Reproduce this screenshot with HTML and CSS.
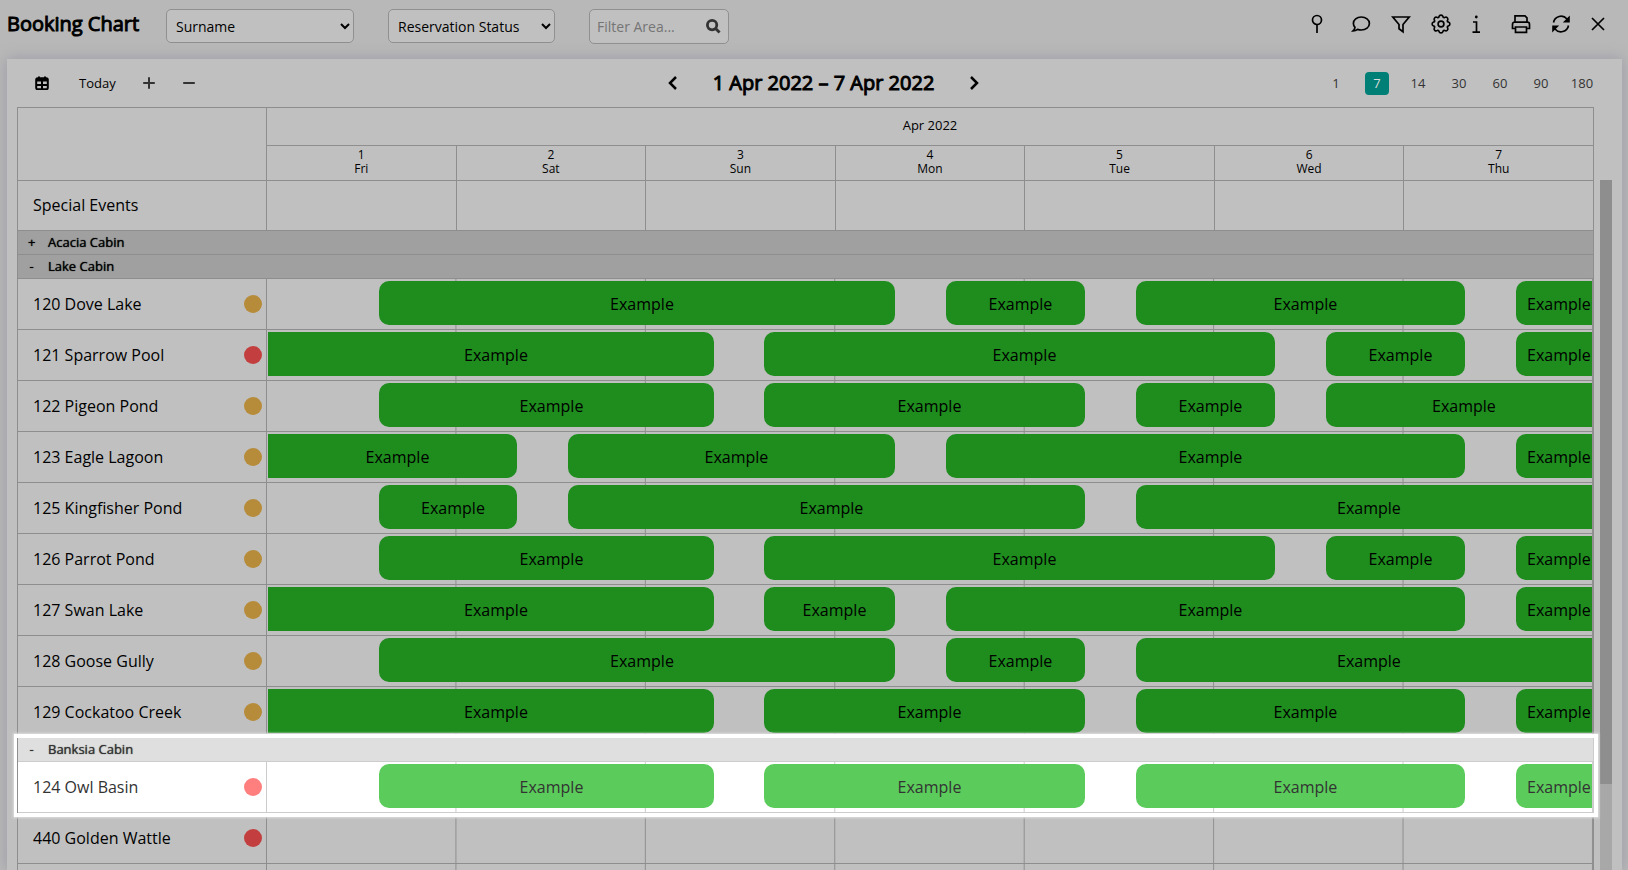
FILE: index.html
```html
<!DOCTYPE html>
<html lang="en">
<head>
<meta charset="utf-8">
<title>Booking Chart</title>
<link rel="stylesheet" href="styles.css">
</head>
<body>
<header class="topbar">
  <h1 class="title">Booking Chart</h1>
  <select class="field field-name" aria-label="Guest label"><option>Surname</option></select>
  <select class="field field-status" aria-label="Colour by"><option>Reservation Status</option></select>
  <div class="field search">
    <input type="text" class="search-input" placeholder="Filter Area..." aria-label="Filter area">
    <svg class="search-icon" viewBox="0 0 16 16"><circle cx="6.5" cy="6.5" r="5"/><path d="M10.2 10.2L14.5 14.5"/></svg>
  </div>
  <nav class="tools">
    <button class="pin" aria-label="Pin"><svg viewBox="0 0 20 20"><circle cx="10" cy="6" r="4.5"/><path d="M10 10.500V19"/></svg></button>
    <button aria-label="Comments"><svg viewBox="0 0 20 20"><path d="M10.300 3C5.800 3 2.400 5.800 2.400 9.400c0 1.500.6 2.900 1.600 4-.2 1.300-.9 2.600-2 3.600 1.800 0 3.400-.6 4.600-1.600 1.200.4 2.400.6 3.700.6 4.500 0 8.100-2.900 8.100-6.600S14.800 3 10.300 3z"/></svg></button>
    <button aria-label="Filter"><svg viewBox="0 0 20 20"><path d="M1.800 3H18.200L12 10.500V17.800L8 14.800V10.500Z"/></svg></button>
    <button aria-label="Settings"><svg class="gear" viewBox="-1 -1 18 18"><circle cx="8" cy="8" r="2.600"/><path d="M9.796 1.343c-.527-1.790-3.065-1.790-3.592 0l-.094.319a.873.873 0 0 1-1.255.52l-.292-.16c-1.640-.892-3.433.902-2.540 2.541l.159.292a.873.873 0 0 1-.52 1.255l-.319.094c-1.790.527-1.790 3.065 0 3.592l.319.094a.873.873 0 0 1 .52 1.255l-.16.292c-.892 1.640.901 3.434 2.541 2.540l.292-.159a.873.873 0 0 1 1.255.52l.094.319c.527 1.790 3.065 1.790 3.592 0l.094-.319a.873.873 0 0 1 1.255-.52l.292.16c1.640.893 3.434-.902 2.540-2.541l-.159-.292a.873.873 0 0 1 .52-1.255l.319-.094c1.790-.527 1.790-3.065 0-3.592l-.319-.094a.873.873 0 0 1-.52-1.255l.16-.292c.893-1.640-.902-3.433-2.541-2.540l-.292.159a.873.873 0 0 1-1.255-.52z"/></svg></button>
    <button class="info" aria-label="Information"><svg viewBox="0 0 20 20"><path d="M6 8H9.500V18M5.500 18.200H13"/><circle class="solid" cx="9.300" cy="3" r="1.400"/></svg></button>
    <button class="print" aria-label="Print"><svg viewBox="0 0 20 20"><path d="M4 8V1.800H14L16 3.800V8M4 14.500H1.500V10.500Q1.500 8.200 3.500 8.200H16.500Q18.500 8.200 18.500 10.500V14.500H16M4.500 13H15.500V18.300H4.500Z"/></svg></button>
    <button aria-label="Refresh"><svg viewBox="0 0 20 20"><path d="M2.500 8.500A7.700 7.700 0 0 1 16 5M17.500 11.500A7.700 7.700 0 0 1 4 15"/><path class="solid" d="M18.800 1.500V8.500H11.800ZM1.200 18.500V11.500H8.200Z"/></svg></button>
    <button class="close" aria-label="Close"><svg viewBox="0 0 20 20"><path d="M4 4L16 16M16 4L4 16"/></svg></button>
  </nav>
</header>
<main class="panel">
  <div class="toolbar">
    <div class="toolbar-left">
      <button class="calendar" aria-label="Choose date"><svg viewBox="0 0 14 14"><rect x="1.200" y="2.200" width="11.600" height="11" rx="1.500"/><path d="M1.200 9H12.800M7 5V13M4 .500V3M10 .500V3"/><path class="solid" d="M1.500 3H12.500V5.500H1.500Z"/></svg></button>
      <button>Today</button>
      <button aria-label="Expand all"><svg class="soft" viewBox="0 0 14 14"><path d="M1.200 7H12.800M7 1.200V12.800"/></svg></button>
      <button aria-label="Collapse all"><svg class="soft" viewBox="0 0 14 14"><path d="M1.200 7H12.800"/></svg></button>
    </div>
    <div class="period">
      <button aria-label="Previous"><svg viewBox="0 0 16 16"><path d="M11 2L5 8L11 14"/></svg></button>
      <h2>1 Apr 2022 – 7 Apr 2022</h2>
      <button aria-label="Next"><svg viewBox="0 0 16 16"><path d="M5 2L11 8L5 14"/></svg></button>
    </div>
    <div class="ranges">
      <button>1</button><button class="active">7</button><button>14</button><button>30</button><button>60</button><button>90</button><button>180</button>
    </div>
  </div>
  <div class="chart">
    <table>
      <colgroup><col class="col-area"><col span="7"></colgroup>
      <thead>
        <tr class="month"><th rowspan="2"></th><th colspan="7">Apr 2022</th></tr>
        <tr class="days"><th>1<br>Fri</th><th>2<br>Sat</th><th>3<br>Sun</th><th>4<br>Mon</th><th>5<br>Tue</th><th>6<br>Wed</th><th>7<br>Thu</th></tr>
      </thead>
      <tbody>
        <tr class="events"><th>Special Events</th><td></td><td></td><td></td><td></td><td></td><td></td><td></td></tr>
      </tbody>
    </table>
    <div class="scrollbar"><div class="thumb"></div></div>
  </div>
</main>
<script src="chart.js"></script>
</body>
</html>
```

FILE: styles.css
```css
* { box-sizing: border-box; }
body {
  margin: 0;
  height: 100vh;
  overflow: hidden;
  display: flex;
  flex-direction: column;
  background: #b8b8b8;
  color: #000;
  font: 16px/20px "Open Sans", "Noto Sans", sans-serif;
}
button { border: 0; padding: 0; background: none; color: inherit; font: inherit; display: flex; align-items: center; justify-content: center; }
svg { fill: none; stroke: currentColor; stroke-width: 2; display: block; }
.solid { fill: currentColor; stroke: none; }

.topbar { display: flex; align-items: flex-start; height: 59px; flex: none; padding: 9px 13px 0 7px; }
.title { margin: 0; width: 159px; font-size: 20px; line-height: 30px; font-weight: 400; -webkit-text-stroke: 1px; white-space: nowrap; }
.field {
  height: 34px;
  border: 1px solid #909090;
  border-radius: 5px;
  background: #c0c0c0;
  color: #000;
  font: 14px/20px "Open Sans", "Noto Sans", sans-serif;
}
select.field { padding: 0 0 0 5px; }
.field-name { width: 188px; margin-right: 34px; }
.field-status { width: 167px; margin-right: 34px; }
.search { display: flex; align-items: center; width: 140px; height: 35px; padding: 0 7px; }
.search-input { flex: 1; min-width: 0; border: 0; padding: 0; background: none; font: inherit; outline: 0; }
.search-input::placeholder { color: #757575; opacity: 1; }
.search-icon { width: 15px; height: 15px; color: #333; stroke-width: 3; }
.tools { display: flex; margin-left: auto; padding-top: 5px; }
.tools button { width: 40px; height: 20px; }
.tools svg { width: 20px; height: 20px; stroke-width: 1.7; }
.tools .gear { stroke-width: 1.5; }
.tools .pin { margin-right: 4px; }
.tools .info { width: 32px; }
.tools .print { margin-left: 8px; }
.tools .close { width: 34px; }

.panel { flex: 1; min-height: 0; margin: 0 6px 0 7px; padding: 0 10px; background: #c0c0c0; box-shadow: 0 0 14px #9a9aa6; display: flex; flex-direction: column; overflow: hidden; }
.toolbar { display: grid; grid-template-columns: 1fr auto 1fr; align-items: center; height: 48px; flex: none; padding-left: 18px; font-size: 13px; }
.toolbar-left { display: flex; gap: 26px; }
.toolbar-left svg { width: 14px; height: 14px; }
.calendar { margin-right: 4px; }
.soft { color: #333; }
.period { display: flex; align-items: center; gap: 32px; }
.period h2 { margin: 0; font-size: 20px; line-height: 28px; font-weight: 400; -webkit-text-stroke: 1px; white-space: nowrap; }
.period svg { width: 16px; height: 16px; stroke-width: 2.500; }
.ranges { display: flex; justify-content: flex-end; color: #333; gap: 1px; padding-right: 18px; }
.ranges button { min-width: 24px; height: 23px; margin: 0 8px; border-radius: 4px; }
.ranges button:last-child { margin-right: 0; }
.ranges .active { background: #007f76; color: #ddd; }

.chart { flex: 1; min-height: 0; display: flex; align-items: flex-start; gap: 6px; }
table { flex: 1; table-layout: fixed; width: 100%; border-collapse: separate; border-spacing: 0; border-top: 1px solid #8e8e8e; border-left: 1px solid #8e8e8e; }
.col-area { width: 249px; }
th, td { padding: 0; border: 0 solid #8e8e8e; border-width: 0 1px 1px 0; font-weight: 400; }
.month { height: 38px; font-size: 13px; }
.days { height: 35px; font-size: 12px; line-height: 14px; }
.month th { padding-bottom: 4px; }
.days th, .events th { padding-bottom: 2px; }
.events { height: 50px; }
.events th, .area th { text-align: left; padding-left: 15px; }
.group { height: 24px; }
.group th { padding-bottom: 2px; background: #a0a0a0; }
.group button { gap: 13px; padding-left: 10px; font-size: 13px; line-height: 18px; text-shadow: 0 0 1px currentColor; }
.group span { width: 7px; }
.area { height: 51px; }
.area-label { display: flex; align-items: center; justify-content: space-between; padding-right: 4px; }
.dot { width: 18px; height: 18px; border-radius: 50%; background: #b68b3a; }
.dot.red { background: #c33f3f; }
.area td { background: linear-gradient(to left, #8e8e8e 1px, transparent 1px) 0 0 / calc(100% / 7) 100%; }
.track { display: flex; height: 44px; margin-bottom: 2px; overflow: hidden; }
.bar { flex: none; display: flex; align-items: center; justify-content: center; padding: 2px 0 0 10px; background: #1e8d1e; border-radius: 10px; }
.bar.from-before { border-top-left-radius: 0; border-bottom-left-radius: 0; }
.bar.continues { border-top-right-radius: 0; border-bottom-right-radius: 0; }

.spotlight { position: relative; color: #333; }
.spotlight::after { content: ""; position: absolute; inset: -4px; border: 4px solid #fff; border-left-width: 3px; box-shadow: 0 0 2px 1px #ddd; pointer-events: none; }
.spotlight th, .spotlight td { background-color: #fff; border-color: #ccc; }
.spotlight .group th { background: #dfdfdf; }
.spotlight .area td { background-image: linear-gradient(to left, #ccc 1px, transparent 1px); }
.spotlight .bar { background: #5bcc5b; }
.spotlight .dot { background: #ff7f7f; }

.scrollbar { align-self: stretch; flex: none; width: 12px; margin: 73px 0 0; background: #a8a8a8; }
.thumb { height: 87.500%; background: #8e8e8e; }
```

FILE: chart.js
```js
// Timeline positions are units along a week that is 1326 units wide.
const WEEK = 1326;
const groups = [
  { name: "Acacia Cabin", open: false, areas: [] },
  { name: "Lake Cabin", open: true, areas: [
    ["120 Dove Lake", "", [[112, 628], [679, 818], [869, 1198], [1249, 1325]]],
    ["121 Sparrow Pool", "red", [[1, 447], [497, 1008], [1059, 1198], [1249, 1325]]],
    ["122 Pigeon Pond", "", [[112, 447], [497, 818], [869, 1008], [1059, 1325]]],
    ["123 Eagle Lagoon", "", [[1, 250], [301, 628], [679, 1198], [1249, 1325]]],
    ["125 Kingfisher Pond", "", [[112, 250], [301, 818], [869, 1325]]],
    ["126 Parrot Pond", "", [[112, 447], [497, 1008], [1059, 1198], [1249, 1325]]],
    ["127 Swan Lake", "", [[1, 447], [497, 628], [679, 1198], [1249, 1325]]],
    ["128 Goose Gully", "", [[112, 628], [679, 818], [869, 1325]]],
    ["129 Cockatoo Creek", "", [[1, 447], [497, 818], [869, 1198], [1249, 1325]]]
  ] },
  { name: "Banksia Cabin", open: true, spotlight: true, areas: [
    ["124 Owl Basin", "red", [[112, 447], [497, 818], [869, 1198], [1249, 1325]]]
  ] },
  { areas: [["440 Golden Wattle", "red", []], ["", "none", []]] }
];

const percent = (units) => (units / WEEK * 100).toFixed(3) + "%";

function areaRow([name, status, stays]) {
  let cursor = 0;
  const bars = stays.map(([from, to]) => {
    const edges = (from === 1 ? " from-before" : "") + (to === 1325 ? " continues" : "");
    const html = `<div class="bar${edges}" style="margin-left:${percent(from - cursor)};width:${percent(to - from)}">Example</div>`;
    cursor = to;
    return html;
  }).join("");
  const dot = status === "none" ? "" : `<span class="dot ${status}"></span>`;
  return `<tr class="area"><th><div class="area-label">${name}${dot}</div></th><td colspan="7"><div class="track">${bars}</div></td></tr>`;
}

const table = document.querySelector("table");
for (const group of groups) {
  const body = document.createElement("tbody");
  if (group.spotlight) body.className = "spotlight";
  const head = group.name
    ? `<tr class="group"><th colspan="8"><button><span>${group.open ? "-" : "+"}</span>${group.name}</button></th></tr>`
    : "";
  body.innerHTML = head + group.areas.map(areaRow).join("");
  table.append(body);
}
```
